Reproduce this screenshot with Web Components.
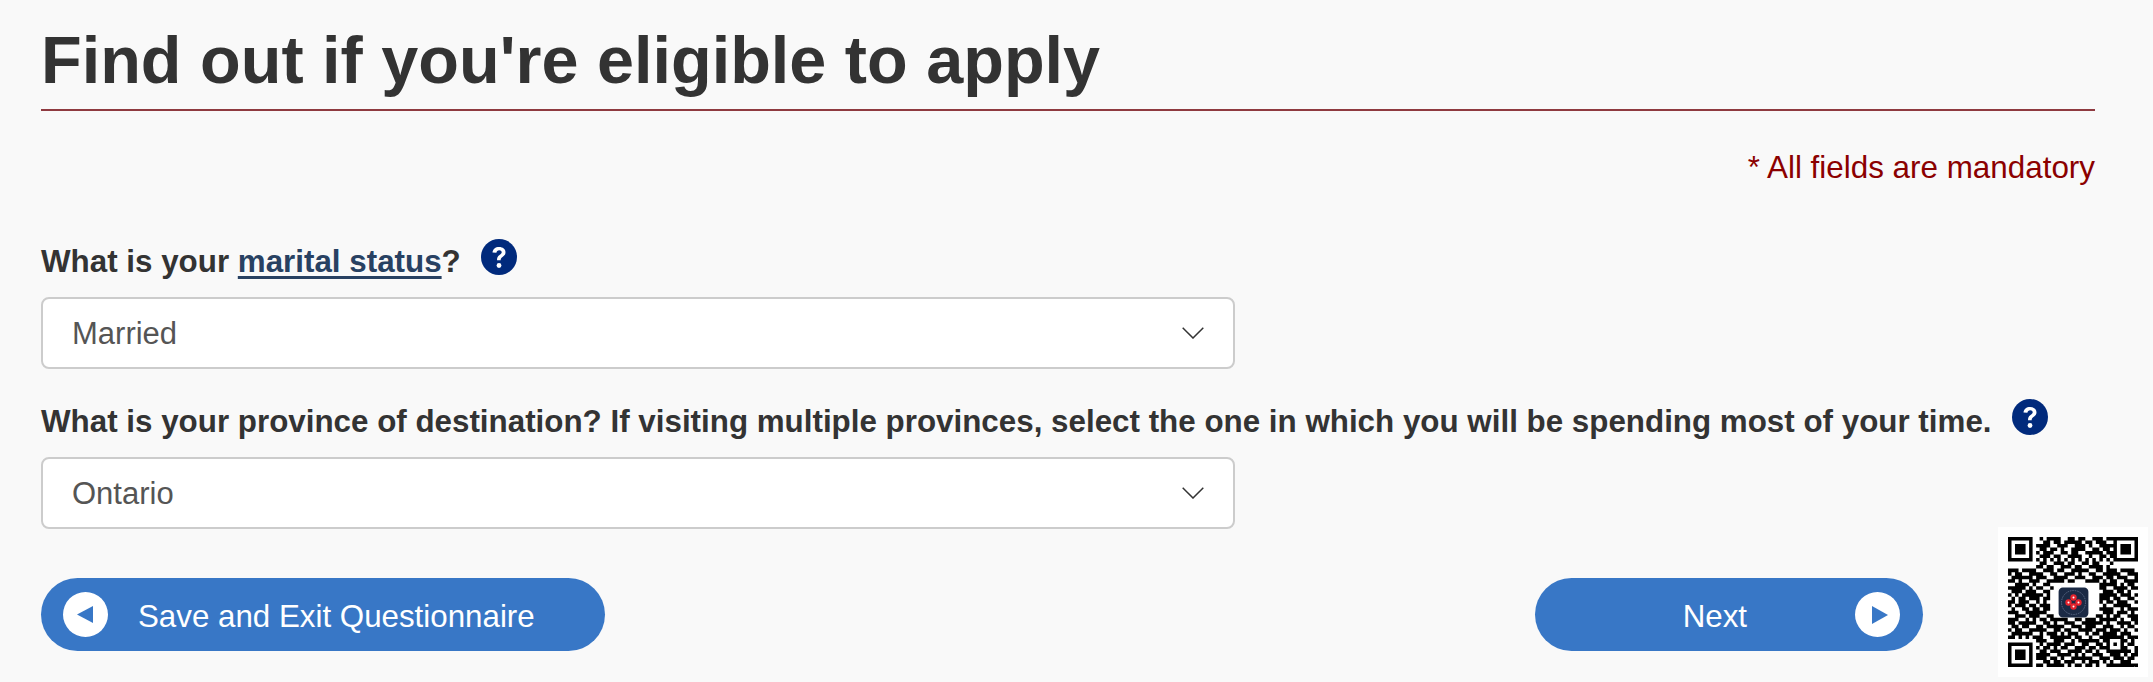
<!DOCTYPE html>
<html lang="en">
<head>
<meta charset="utf-8">
<title>Find out if you're eligible to apply</title>
<style>
  html, body { margin: 0; background: #f9f9f9; }
  body { font-family: "Liberation Sans", Arial, sans-serif; color: #333; height: 682px; overflow: hidden; }
</style>
</head>
<body>
<eligibility-page>
  <page-heading>Find out if you're eligible to apply</page-heading>
  <mandatory-note>* All fields are mandatory</mandatory-note>
  <select-field value="Married">What is your <a href="#">marital status</a>?</select-field>
  <select-field value="Ontario" style="margin-top:35px">What is your province of destination? If visiting multiple provinces, select the one in which you will be spending most of your time.</select-field>
  <nav-buttons></nav-buttons>
</eligibility-page>
<qr-badge></qr-badge>

<script>
class EligibilityPage extends HTMLElement {
  constructor() {
    super();
    this.attachShadow({ mode: 'open' });
    this.shadowRoot.innerHTML = `
      <style>
        :host { display: block; padding: 0 58px 0 41px; }
      </style>
      <slot></slot>
    `;
  }
}

class PageHeading extends HTMLElement {
  constructor() {
    super();
    this.attachShadow({ mode: 'open' });
    this.shadowRoot.innerHTML = `
      <style>
        :host { display: block; border-bottom: 2px solid #8f3a40; height: 109px; }
        h1 { margin: 0; padding-top: 22px; font-size: 66.6px; line-height: 76px; font-weight: 700; color: #333; }
      </style>
      <h1><slot></slot></h1>
    `;
  }
}

class MandatoryNote extends HTMLElement {
  constructor() {
    super();
    this.attachShadow({ mode: 'open' });
    this.shadowRoot.innerHTML = `
      <style>
        :host { display: block; text-align: right; color: #8b0000; font-size: 31.4px; line-height: 36px; margin: 39px 0 58px; }
      </style>
      <slot></slot>
    `;
  }
}

class SelectField extends HTMLElement {
  constructor() {
    super();
    this.attachShadow({ mode: 'open' });
    this.shadowRoot.innerHTML = `
      <style>
        :host { display: block; }
        .label { display: flex; align-items: center; gap: 20px; font-size: 31.35px; font-weight: 700; line-height: 36px; color: #333; margin-bottom: 17px; white-space: nowrap; }
        ::slotted(a) { color: #284162; text-decoration-thickness: 3px; text-underline-offset: 4px; }
        .help { width: 36px; height: 36px; flex: none; margin-top: -10px; }
        .box { box-sizing: border-box; width: 1194px; height: 72px; background: #fff; border: 2px solid #ccc; border-radius: 8px; display: flex; align-items: center; justify-content: space-between; padding: 0 29px; font-size: 31px; color: #555; }
        .val { padding-top: 2px; }
      </style>
      <div class="label">
        <span><slot></slot></span>
        <svg class="help" viewBox="0 0 36 36"><circle cx="18" cy="18" r="18" fill="#012a7c"/><path d="M11.500 13.500c.3-3.500 2.900-5.500 6.600-5.500 3.800 0 6.400 2.100 6.400 5.200 0 2.300-1.100 3.500-3 4.800-1.500 1-1.800 1.600-1.800 3.300h-3.700c0-2.800.5-4 2.500-5.400 1.500-1 2.200-1.600 2.200-2.600 0-1.200-1-2-2.500-2-1.600 0-2.600.9-2.800 2.400z" fill="#fff"/><circle cx="18" cy="26.500" r="2.400" fill="#fff"/></svg>
      </div>
      <div class="box">
        <span class="val"></span>
        <svg width="22" height="12" viewBox="0 0 22 12"><path d="M.700.700 11 11 21.300.700" fill="none" stroke="#333" stroke-width="1.500"/></svg>
      </div>
    `;
  }
  connectedCallback() {
    this.shadowRoot.querySelector('.val').textContent = this.getAttribute('value');
  }
}

class PillButton extends HTMLElement {
  constructor() {
    super();
    this.attachShadow({ mode: 'open' });
    const next = this.hasAttribute('next');
    const icon = `<svg width="45" height="45" viewBox="0 0 45 45" style="filter:blur(.5px);flex:none"><circle cx="22.500" cy="22.500" r="22.500" fill="#fff"/><path d="${next ? 'M17 14 33 23 17 32z' : 'M30 14 14 22.500 30 31z'}" fill="#3877c6"/></svg>`;
    this.shadowRoot.innerHTML = `
      <style>
        :host { display: flex; box-sizing: border-box; height: 73px; background: #3877c6; border-radius: 37px; align-items: center; color: #fff; font-size: 31.3px; }
      </style>
      ${next ? '' : icon}<slot></slot>${next ? icon : ''}
    `;
  }
}

class NavButtons extends HTMLElement {
  constructor() {
    super();
    this.attachShadow({ mode: 'open' });
    this.shadowRoot.innerHTML = `
      <style>
        :host { display: flex; justify-content: space-between; margin-top: 49px; padding-right: 172px; }
        #back { width: 564px; padding-left: 22px; }
        #back span { margin-left: 30px; padding-top: 4px; }
        #next { width: 388px; padding-right: 23px; justify-content: flex-end; }
        #next span { margin-right: 108px; padding-top: 4px; }
      </style>
      <pill-button id="back"><span>Save and Exit Questionnaire</span></pill-button>
      <pill-button id="next" next><span>Next</span></pill-button>
    `;
  }
}

// rough copy of the module grid, the finders and alignment square get stamped on top
const QR_ROWS = [
  '0000000001011110011011001110110000000',
  '0000000000110110111110110111001000000',
  '0000000011110011100111010011111000000',
  '0000000001101101001111001101100000000',
  '0000000010111001101100111110110000000',
  '0000000001110110011110010011011000000',
  '0000000010101010101010101010100000000',
  '0000000001100111011001101100010000000',
  '0000000011011001110110011110100000000',
  '1110111100111011001111100110111011110',
  '1011001111001100111010011001111100111',
  '0111111011100111100111001110110111001',
  '1101001110011111011000111101011001111',
  '0011110100110000000000000011111010110',
  '1111101011001000000000000011001111011',
  '0111011100110000000000000001110110100',
  '1010111111010000000000000011111011101',
  '0101101110110000000000000011101100110',
  '1101110010100000000000000010110111001',
  '1011101101110000000000000001001111100',
  '0100110110110000000000000011110010111',
  '1110011111100000000000000001110111010',
  '0011101110011000000000000110101100111',
  '1110010101101111100110111011111010011',
  '1101111100110100111001111110100111101',
  '0110110011011111001110111001110010110',
  '1011001111100110110011110111011101001',
  '0111111001011101011100101101111011100',
  '1101010111001111110110010011011110111',
  '0000000011100111001011111101110101010',
  '0000000001011110111001100110111100110',
  '0000000010110101100111011011000111001',
  '0000000001101110011110110100111011101',
  '0000000011110011110101001110011101011',
  '0000000011101101001111110011101110110',
  '0000000000110110111001011101010011100',
  '0000000011011111010110110100111111111'
];

function qrPath() {
  const size = 37;
  const grid = QR_ROWS.map(r => [...r].map(c => c === '1'));
  const stamp = (x, y, n) => {
    for (let r = 0; r < n; r++) {
      for (let c = 0; c < n; c++) {
        grid[y + r][x + c] = Math.min(r, c, n - 1 - r, n - 1 - c) !== 1;
      }
    }
  };
  stamp(0, 0, 7);
  stamp(size - 7, 0, 7);
  stamp(0, size - 7, 7);
  stamp(28, 28, 5);
  let d = '';
  grid.forEach((row, y) => row.forEach((on, x) => {
    if (on) d += `M${x} ${y}h1v1h-1z`;
  }));
  return d;
}

class QrBadge extends HTMLElement {
  constructor() {
    super();
    this.attachShadow({ mode: 'open' });
    this.shadowRoot.innerHTML = `
      <style>
        :host { position: absolute; left: 1998px; top: 527px; width: 150px; height: 150px; background: #fff; display: grid; place-items: center; }
        .code { width: 130px; height: 130px; display: block; filter: blur(.4px); grid-area: 1 / 1; }
        .logo { width: 33px; height: 33px; display: block; grid-area: 1 / 1; }
      </style>
      <svg class="code" viewBox="0 0 37 37"><path d="${qrPath()}" fill="#000"/></svg>
      <svg class="logo" viewBox="0 0 33 33">
        <rect x=".8" y=".8" width="31.400" height="31.400" rx="5" fill="#1b2a45" stroke="#fff" stroke-width="1.600"/>
        <circle cx="16.500" cy="16.500" r="12" fill="none" stroke="#5b6a86" stroke-width="1" stroke-dasharray="1.500 1"/>
        <g fill="#e5232d">
          <circle cx="16.500" cy="11.500" r="3.200"/><circle cx="11.500" cy="16.500" r="3.200"/><circle cx="21.500" cy="16.500" r="3.200"/><circle cx="16.500" cy="20.500" r="3.200"/>
        </g>
        <g fill="#fff">
          <circle cx="16.500" cy="11.500" r="1"/><circle cx="11.500" cy="16.500" r="1"/><circle cx="21.500" cy="16.500" r="1"/><circle cx="16.500" cy="20.500" r="1"/>
        </g>
      </svg>
    `;
  }
}

customElements.define('eligibility-page', EligibilityPage);
customElements.define('page-heading', PageHeading);
customElements.define('mandatory-note', MandatoryNote);
customElements.define('select-field', SelectField);
customElements.define('pill-button', PillButton);
customElements.define('nav-buttons', NavButtons);
customElements.define('qr-badge', QrBadge);
</script>
</body>
</html>
